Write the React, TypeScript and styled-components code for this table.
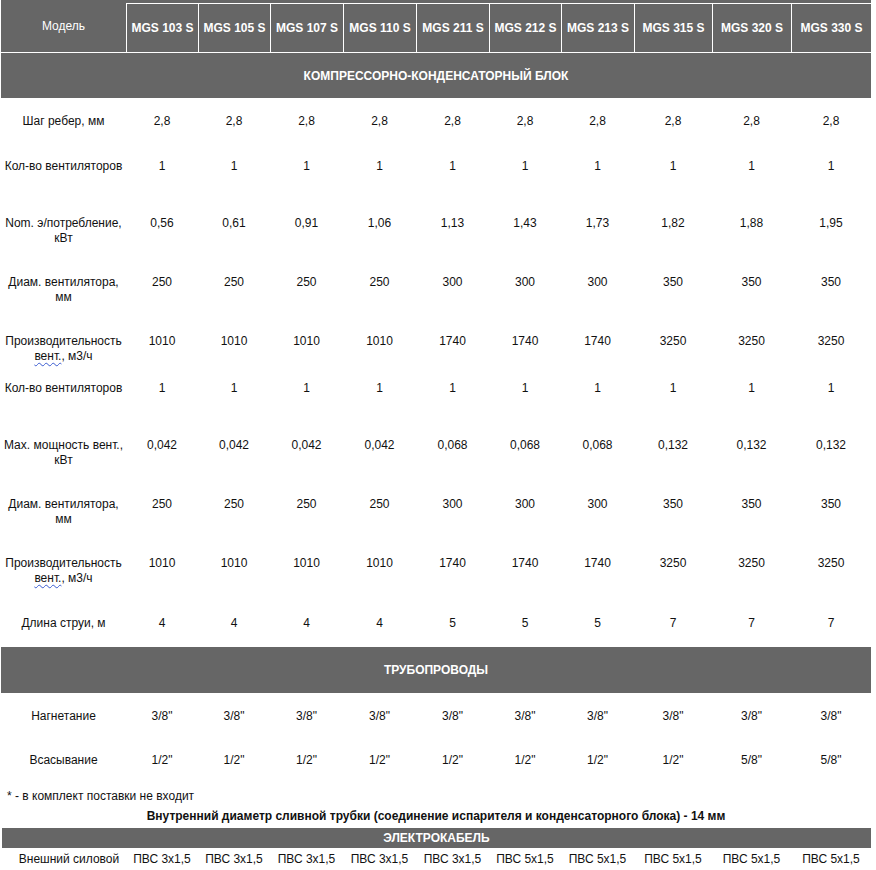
import React from 'react';
import styled, { createGlobalStyle } from 'styled-components';

const GRAY = '#666666';
const COLS = '125px 72px 72px 73px 73px 73px 72px 73px 78px 79px 80px';

const GlobalStyle = createGlobalStyle`
  body {
    margin: 0;
    background: #ffffff;
    font-family: Arial, "Liberation Sans", sans-serif;
    font-size: 12px;
    color: #111111;
  }
`;

const Page = styled.div`
  width: 870px;
  margin-left: 1px;
`;

const HeaderRow = styled.div`
  display: grid;
  grid-template-columns: ${COLS};
  height: 53px;
  box-sizing: border-box;
  background: ${GRAY};
  border-bottom: 1px solid #ffffff;
  color: #ffffff;
`;

const HeadCell = styled.div<{ $first?: boolean }>`
  display: flex;
  align-items: center;
  justify-content: center;
  white-space: nowrap;
  ${({ $first }) =>
    $first
      ? ''
      : `
    margin-top: 3px;
    border-top: 1px solid #ffffff;
    border-left: 1px solid #ffffff;
    font-weight: bold;
  `}
`;

const SectionBar = styled.div<{ $h: number }>`
  height: ${({ $h }) => $h}px;
  background: ${GRAY};
  color: #ffffff;
  font-weight: bold;
  display: flex;
  align-items: center;
  justify-content: center;
`;

const DataRow = styled.div<{ $h: number }>`
  display: grid;
  grid-template-columns: ${COLS};
  height: ${({ $h }) => $h}px;
  box-sizing: border-box;
  padding-top: 16px;
  line-height: 15px;
  text-align: center;
  align-items: start;
`;

const Cell = styled.div`
  white-space: nowrap;
`;

const Spell = styled.span`
  text-decoration: underline wavy #3a5bd0;
  text-decoration-thickness: 1px;
  text-underline-offset: 2px;
`;

const Note = styled.div`
  margin: 7px 0 0 6px;
  line-height: 15px;
`;

const BoldNote = styled.div`
  margin-top: 5px;
  line-height: 15px;
  font-weight: bold;
  text-align: center;
`;

const CableBar = styled(SectionBar)`
  margin-top: 4px;
  margin-left: 1px;
`;

const CableRow = styled.div`
  display: grid;
  grid-template-columns: ${COLS};
  height: 22px;
  align-items: center;
  text-align: center;
`;

const CableLabel = styled.div`
  padding-left: 11px;
  white-space: nowrap;
`;

const models = ['103', '105', '107', '110', '211', '212', '213', '315', '320', '330'];

const vent = (
  <>
    Производительность
    <br />
    <Spell>вент.</Spell>, м3/ч
  </>
);

type Row = { label: React.ReactNode; values: string[]; h: number };

const unitRows: Row[] = [
  { label: 'Шаг ребер, мм', values: Array(10).fill('2,8'), h: 45 },
  { label: 'Кол-во вентиляторов', values: Array(10).fill('1'), h: 57 },
  {
    label: <>Nom. э/потребление,<br />кВт</>,
    values: ['0,56', '0,61', '0,91', '1,06', '1,13', '1,43', '1,73', '1,82', '1,88', '1,95'],
    h: 59,
  },
  {
    label: <>Диам. вентилятора,<br />мм</>,
    values: ['250', '250', '250', '250', '300', '300', '300', '350', '350', '350'],
    h: 59,
  },
  {
    label: vent,
    values: ['1010', '1010', '1010', '1010', '1740', '1740', '1740', '3250', '3250', '3250'],
    h: 47,
  },
  { label: 'Кол-во вентиляторов', values: Array(10).fill('1'), h: 57 },
  {
    label: <>Мах. мощность вент.,<br />кВт</>,
    values: ['0,042', '0,042', '0,042', '0,042', '0,068', '0,068', '0,068', '0,132', '0,132', '0,132'],
    h: 59,
  },
  {
    label: <>Диам. вентилятора,<br />мм</>,
    values: ['250', '250', '250', '250', '300', '300', '300', '350', '350', '350'],
    h: 59,
  },
  {
    label: vent,
    values: ['1010', '1010', '1010', '1010', '1740', '1740', '1740', '3250', '3250', '3250'],
    h: 60,
  },
  { label: 'Длина струи, м', values: ['4', '4', '4', '4', '5', '5', '5', '7', '7', '7'], h: 47 },
];

const pipeRows: Row[] = [
  { label: 'Нагнетание', values: Array(10).fill('3/8"'), h: 44 },
  {
    label: 'Всасывание',
    values: ['1/2"', '1/2"', '1/2"', '1/2"', '1/2"', '1/2"', '1/2"', '1/2"', '5/8"', '5/8"'],
    h: 45,
  },
];

const cables = ['3х1,5', '3х1,5', '3х1,5', '3х1,5', '3х1,5', '5х1,5', '5х1,5', '5х1,5', '5х1,5', '5х1,5'];

const renderRows = (rows: Row[]) =>
  rows.map((row, i) => (
    <DataRow key={i} $h={row.h}>
      <Cell>{row.label}</Cell>
      {row.values.map((v, j) => (
        <Cell key={j}>{v}</Cell>
      ))}
    </DataRow>
  ));

export default function App() {
  return (
    <Page>
      <GlobalStyle />
      <HeaderRow>
        <HeadCell $first>Модель</HeadCell>
        {models.map((m) => (
          <HeadCell key={m}>MGS {m} S</HeadCell>
        ))}
      </HeaderRow>

      <SectionBar $h={45}>КОМПРЕССОРНО-КОНДЕНСАТОРНЫЙ БЛОК</SectionBar>
      {renderRows(unitRows)}

      <SectionBar $h={46}>ТРУБОПРОВОДЫ</SectionBar>
      {renderRows(pipeRows)}

      <Note>* - в комплект поставки не входит</Note>
      <BoldNote>
        Внутренний диаметр сливной трубки (соединение испарителя и конденсаторного блока) - 14 мм
      </BoldNote>

      <CableBar $h={20}>ЭЛЕКТРОКАБЕЛЬ</CableBar>
      <CableRow>
        <CableLabel>Внешний силовой</CableLabel>
        {cables.map((c, i) => (
          <Cell key={i}>ПВС {c}</Cell>
        ))}
      </CableRow>
    </Page>
  );
}
